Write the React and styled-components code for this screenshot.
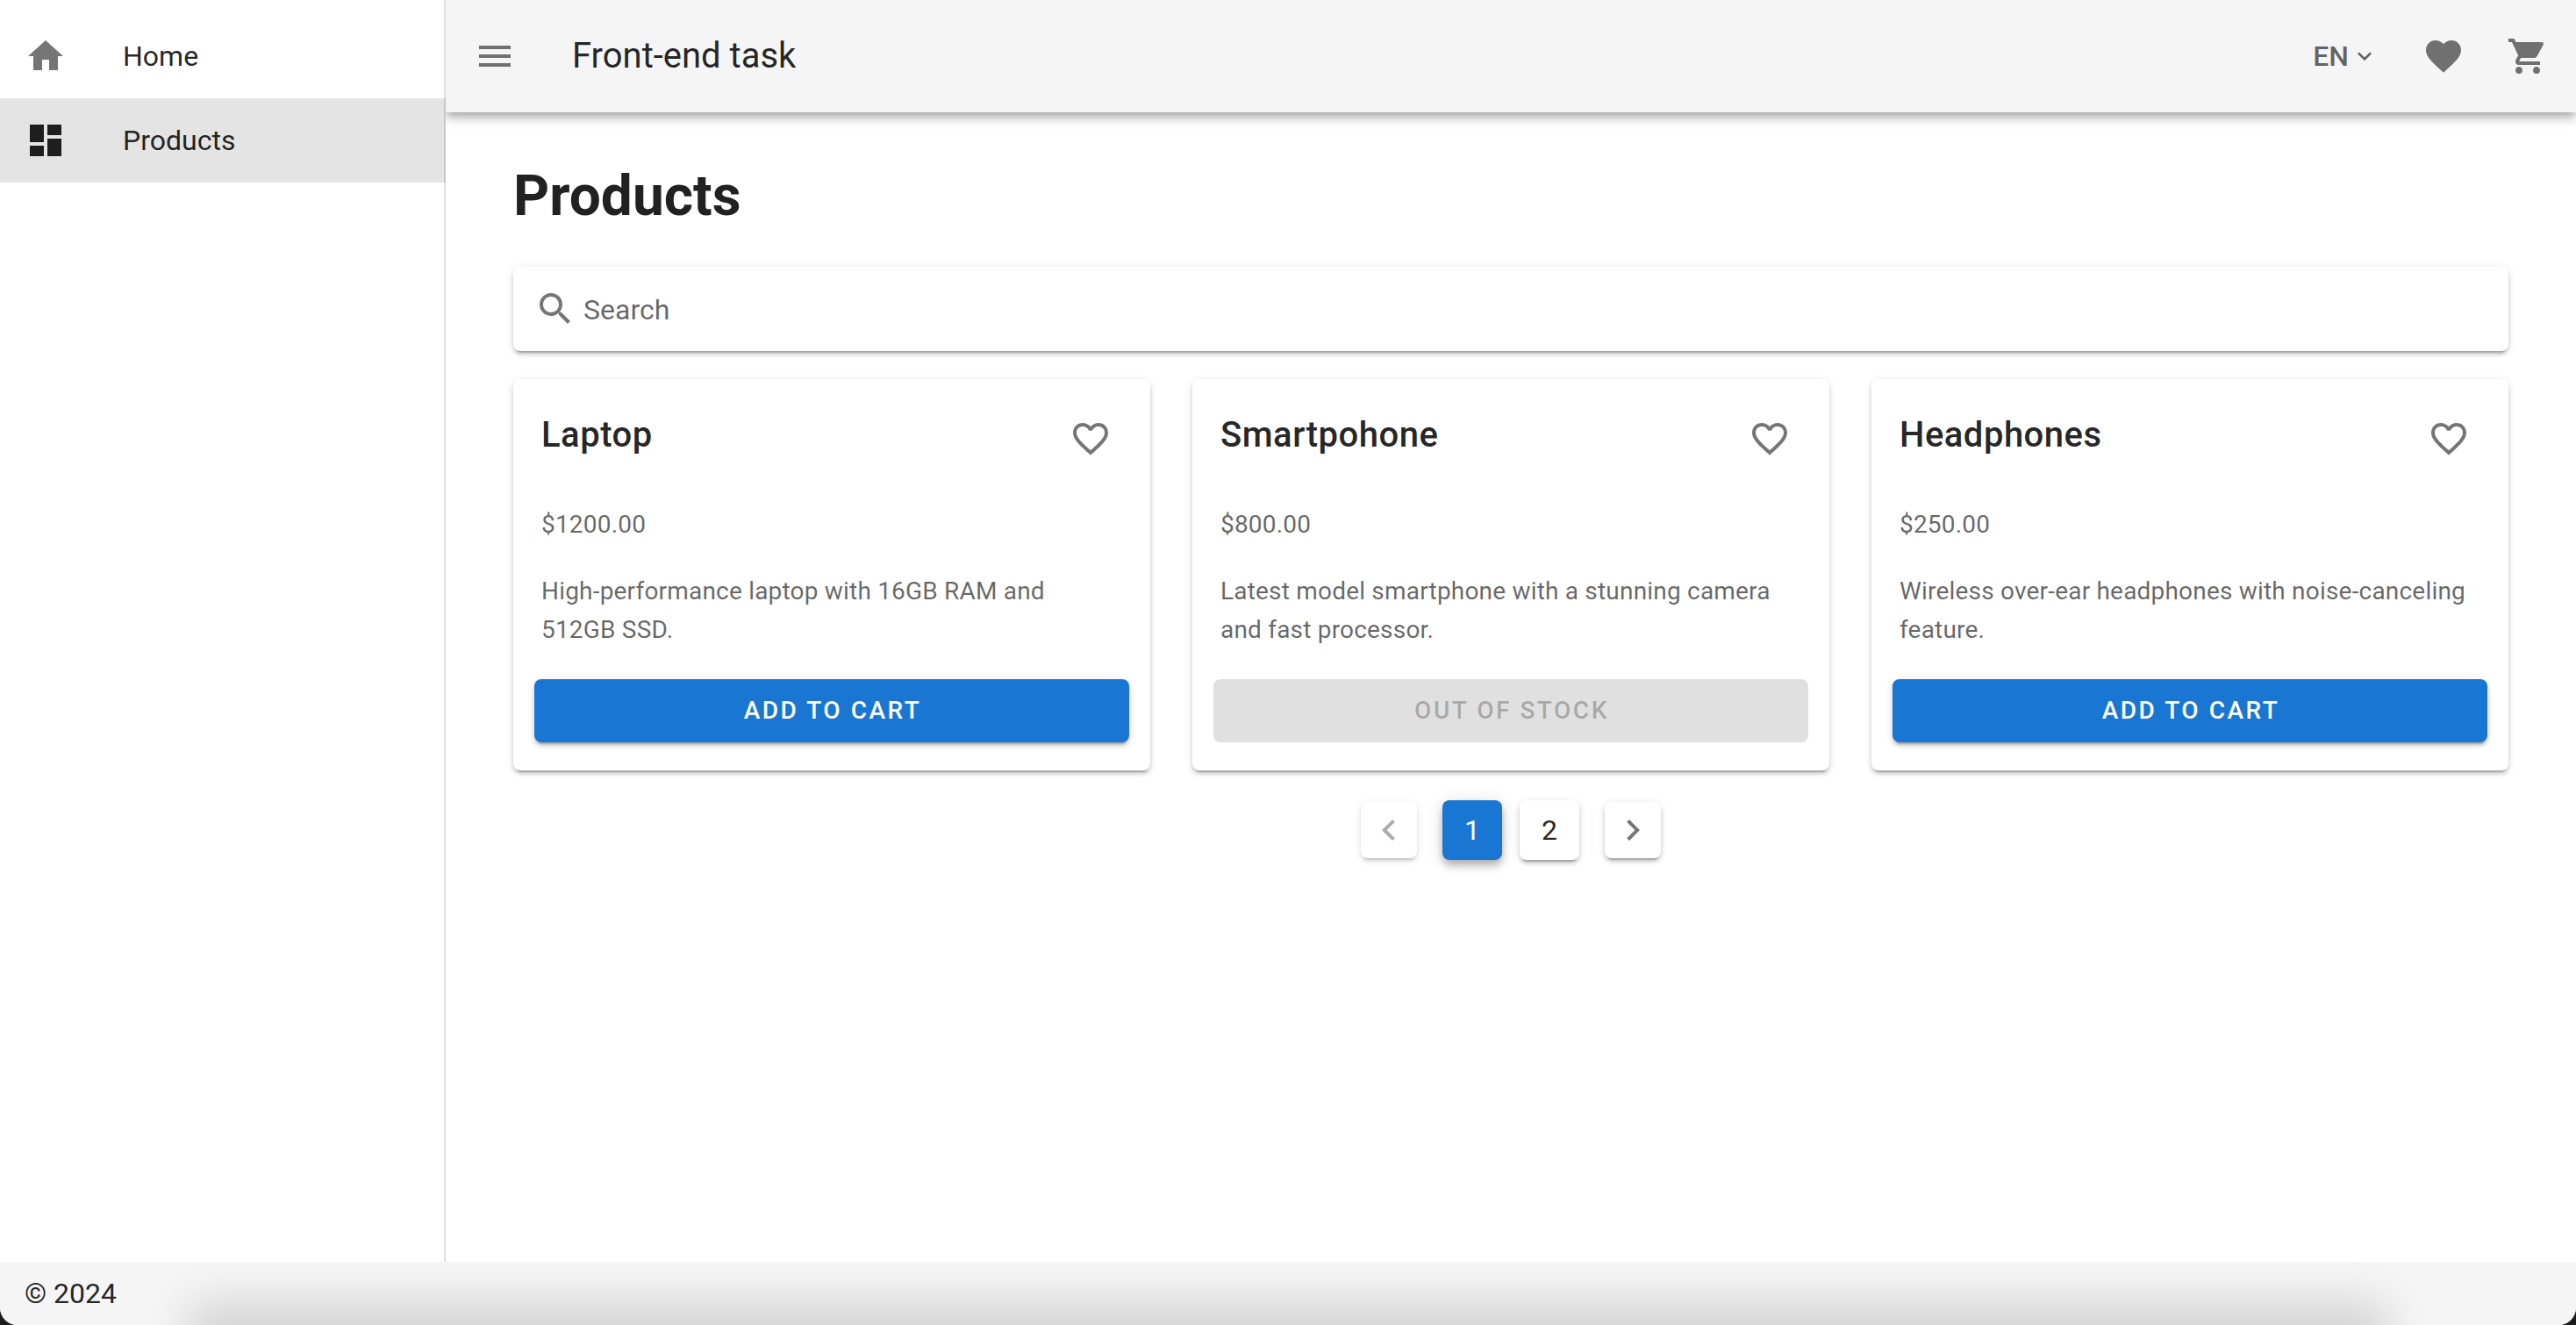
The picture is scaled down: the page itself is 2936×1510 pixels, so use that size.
import React, { useState } from "react";
import styled, { createGlobalStyle, css } from "styled-components";

const ink = "rgba(0, 0, 0, 0.87)";
const inkMuted = "rgba(0, 0, 0, 0.6)";
const inkIcon = "rgba(0, 0, 0, 0.54)";
const primary = "#1976d2";
const surface = "#f5f5f5";
const lowShadow =
  "0 6px 2px -4px rgba(0,0,0,.2), 0 4px 4px 0 rgba(0,0,0,.14), 0 2px 10px 0 rgba(0,0,0,.12)";
const highShadow =
  "0 4px 8px -2px rgba(0,0,0,.2), 0 8px 10px 0 rgba(0,0,0,.14), 0 2px 20px 0 rgba(0,0,0,.12)";

const GlobalStyle = createGlobalStyle`
  *, *::before, *::after { box-sizing: border-box; }
  body {
    margin: 0;
    background: #1c1c1c;
    color: ${ink};
    font: 400 32px/48px Roboto, "Liberation Sans", sans-serif;
    -webkit-font-smoothing: antialiased;
  }
  h1, h2, p, ul { margin: 0; padding: 0; }
  ul { list-style: none; }
  button, input { font: inherit; color: inherit; }
  button { border: 0; padding: 0; background: none; cursor: pointer; }
  a { color: inherit; text-decoration: none; }
`;

const icons = {
  home: "M10,20V14H14V20H19V12H22L12,3L2,12H5V20H10Z",
  dashboard: "M13,3V9H21V3M13,21H21V11H13M3,21H11V15H3M3,13H11V3H3V13Z",
  menu: "M3,6H21V8H3V6M3,11H21V13H3V11M3,16H21V18H3V16Z",
  chevronDown: "M7.41,8.58L12,13.17L16.59,8.58L18,10L12,16L6,10L7.41,8.58Z",
  chevronLeft: "M15.41,16.58L10.83,12L15.41,7.41L14,6L8,12L14,18L15.41,16.58Z",
  chevronRight: "M8.59,16.58L13.17,12L8.59,7.41L10,6L16,12L10,18L8.59,16.58Z",
  heart:
    "M12,21.35L10.55,20.03C5.4,15.36 2,12.27 2,8.5C2,5.41 4.42,3 7.5,3C9.24,3 10.91,3.81 12,5.08C13.09,3.81 14.76,3 16.5,3C19.58,3 22,5.41 22,8.5C22,12.27 18.6,15.36 13.45,20.03L12,21.35Z",
  heartOutline:
    "M12.1,18.55L12,18.65L11.89,18.55C7.14,14.24 4,11.39 4,8.5C4,6.5 5.5,5 7.5,5C9.04,5 10.54,6 11.07,7.36H12.93C13.46,6 14.96,5 16.5,5C18.5,5 20,6.5 20,8.5C20,11.39 16.86,14.24 12.1,18.55M16.5,3C14.76,3 13.09,3.81 12,5.08C10.91,3.81 9.24,3 7.5,3C4.42,3 2,5.41 2,8.5C2,12.27 5.4,15.36 10.55,20.03L12,21.35L13.45,20.03C18.6,15.36 22,12.27 22,8.5C22,5.41 19.58,3 16.5,3Z",
  cart:
    "M17,18C15.89,18 15,18.89 15,20A2,2 0 0,0 17,22A2,2 0 0,0 19,20C19,18.89 18.1,18 17,18M1,2V4H3L6.6,11.59L5.24,14.04C5.09,14.32 5,14.65 5,15A2,2 0 0,0 7,17H19V15H7.42A0.25,0.25 0 0,1 7.17,14.75C7.17,14.7 7.18,14.66 7.2,14.63L8.1,13H15.55C16.3,13 16.96,12.58 17.3,11.97L20.88,5.5C20.95,5.34 21,5.17 21,5A1,1 0 0,0 20,4H5.21L4.27,2M7,18C5.89,18 5,18.89 5,20A2,2 0 0,0 7,22A2,2 0 0,0 9,20C9,18.89 8.1,18 7,18Z",
  magnify:
    "M9.5,3A6.5,6.5 0 0,1 16,9.5C16,11.11 15.41,12.59 14.44,13.73L14.71,14H15.5L20.5,19L19,20.5L14,15.5V14.71L13.73,14.44C12.59,15.41 11.11,16 9.5,16A6.5,6.5 0 0,1 3,9.5A6.5,6.5 0 0,1 9.5,3M9.5,5C7,5 5,7 5,9.5C5,12 7,14 9.5,14C12,14 14,12 14,9.5C14,7 12,5 9.5,5Z",
};

const Glyph = styled.svg`
  display: block;
  flex: none;
  width: ${({ $size }) => $size}px;
  height: ${({ $size }) => $size}px;
  fill: currentColor;
`;

function Icon({ name, size = 48 }) {
  return (
    <Glyph $size={size} viewBox="0 0 24 24" aria-hidden="true">
      <path d={icons[name]} />
    </Glyph>
  );
}

const Shell = styled.div`
  position: relative;
  display: flex;
  flex-direction: column;
  min-height: 100vh;
  background: #fff;
  border-radius: 0 0 20px 20px;
  overflow: hidden;
`;

const Body = styled.div`
  display: flex;
  flex: 1;
`;

/* The divider is painted over the rows so the active row shows through it. */
const Sidebar = styled.nav`
  position: relative;
  z-index: 1;
  flex: none;
  width: 508px;
  padding: 16px 0;
  background: #fff;

  &::after {
    content: "";
    position: absolute;
    inset: 0 0 0 auto;
    width: 2px;
    background: rgba(0, 0, 0, 0.12);
  }
`;

const NavLink = styled.a`
  display: flex;
  align-items: center;
  gap: 64px;
  height: 96px;
  padding: 0 28px;
  background: ${({ $active }) => ($active ? "#e4e4e4" : "transparent")};

  svg {
    color: ${({ $active }) => ($active ? ink : inkIcon)};
  }
`;

const Page = styled.div`
  flex: 1;
  min-width: 0;
`;

const AppBar = styled.header`
  display: flex;
  align-items: center;
  height: 128px;
  padding: 0 31px 0 32px;
  background: ${surface};
  box-shadow: ${highShadow};
`;

const BarTitle = styled.div`
  flex: 1;
  padding-left: 64px;
  font-size: 40px;
`;

const BarActions = styled.div`
  display: flex;
  align-items: center;
  gap: 48px;
`;

const IconButton = styled.button`
  display: grid;
  place-items: center;
  height: 72px;
  color: ${inkIcon};
`;

const LanguageButton = styled.button`
  display: flex;
  align-items: center;
  gap: 2px;
  padding-right: 2px;
  font-weight: 500;
  color: ${inkMuted};
`;

const Content = styled.main`
  padding: 48px 77px;
`;

const PageTitle = styled.h1`
  margin-bottom: 32px;
  font-size: 64px;
  line-height: 96px;
  font-weight: 700;
`;

const SearchBox = styled.label`
  display: flex;
  align-items: center;
  gap: 8px;
  height: 96px;
  padding: 0 24px;
  margin-bottom: 32px;
  border-radius: 8px;
  background: #fff;
  box-shadow: ${lowShadow};
  color: ${inkIcon};
`;

const SearchInput = styled.input`
  flex: 1;
  min-width: 0;
  padding: 2px 0 0;
  border: 0;
  outline: 0;
  background: none;
  color: ${ink};

  &::placeholder {
    color: ${inkMuted};
    opacity: 1;
  }
`;

const ProductGrid = styled.ul`
  display: grid;
  grid-template-columns: repeat(3, 1fr);
  gap: 48px;
`;

const Card = styled.li`
  display: flex;
  flex-direction: column;
  padding: 32px 24px;
  border-radius: 8px;
  background: #fff;
  box-shadow: ${lowShadow};
`;

const CardHead = styled.div`
  display: flex;
  align-items: flex-start;
  justify-content: space-between;
  padding: 0 20px 0 8px;
  margin-bottom: 40px;
`;

const CardTitle = styled.h2`
  font-size: 40px;
  line-height: 64px;
  font-weight: 500;
  letter-spacing: 0.0125em;
`;

const CardText = styled.p`
  padding: 0 8px;
  margin-bottom: 32px;
  font-size: 28px;
  line-height: 44px;
  letter-spacing: 0.007em;
  color: ${inkMuted};
`;

const CardActions = styled.div`
  display: flex;
  margin-top: auto;
  padding-top: 2px;
`;

const CartButton = styled.button`
  flex: 1;
  height: 72px;
  padding-left: 2px;
  border-radius: 8px;
  background: ${primary};
  box-shadow: ${lowShadow};
  color: #fff;
  font-size: 28px;
  font-weight: 500;
  letter-spacing: 0.09em;
  text-transform: uppercase;

  &:disabled {
    background: rgba(0, 0, 0, 0.12);
    box-shadow: none;
    color: rgba(0, 0, 0, 0.26);
    cursor: default;
  }
`;

const Pagination = styled.nav`
  display: flex;
  align-items: center;
  justify-content: center;
  gap: 29px;
  padding-top: 34px;
`;

const PageList = styled.ul`
  display: flex;
  gap: 20px;
`;

const pagerBox = css`
  display: grid;
  place-items: center;
  border-radius: 8px;
  background: #fff;
  box-shadow: ${lowShadow};
`;

const PageStep = styled.button`
  ${pagerBox}
  width: 64px;
  height: 64px;
  color: ${inkIcon};

  &:disabled {
    opacity: 0.6;
    cursor: default;
  }
`;

const PageNumber = styled.button`
  ${pagerBox}
  width: 68px;
  height: 68px;
  ${({ $current }) =>
    $current &&
    css`
      background: ${primary};
      box-shadow: ${highShadow};
      color: #fff;
    `}
`;

const Footer = styled.footer`
  padding: 12px 28px;
  background: ${surface};
`;

const BottomShade = styled.div`
  position: absolute;
  left: 216px;
  right: 216px;
  bottom: -80px;
  height: 80px;
  box-shadow: 0 -26px 52px rgba(0, 0, 0, 0.14);
  pointer-events: none;
`;

const navItems = [
  { label: "Home", icon: "home" },
  { label: "Products", icon: "dashboard", active: true },
];

const products = [
  {
    name: "Laptop",
    price: 1200,
    text: "High-performance laptop with 16GB RAM and 512GB SSD.",
    inStock: true,
  },
  {
    name: "Smartpohone",
    price: 800,
    text: "Latest model smartphone with a stunning camera and fast processor.",
    inStock: false,
  },
  {
    name: "Headphones",
    price: 250,
    text: "Wireless over-ear headphones with noise-canceling feature.",
    inStock: true,
  },
];

function ProductCard({ product }) {
  return (
    <Card>
      <CardHead>
        <CardTitle>{product.name}</CardTitle>
        <IconButton type="button" aria-label={`Add ${product.name} to favorites`}>
          <Icon name="heartOutline" />
        </IconButton>
      </CardHead>
      <CardText>${product.price.toFixed(2)}</CardText>
      <CardText>{product.text}</CardText>
      <CardActions>
        <CartButton type="button" disabled={!product.inStock}>
          {product.inStock ? "Add to cart" : "Out of stock"}
        </CartButton>
      </CardActions>
    </Card>
  );
}

export default function App() {
  const [query, setQuery] = useState("");
  const [page, setPage] = useState(1);

  return (
    <Shell>
      <GlobalStyle />
      <Body>
        <Sidebar aria-label="Main">
          {navItems.map((item) => (
            <NavLink
              key={item.label}
              href="#"
              $active={item.active}
              aria-current={item.active ? "page" : undefined}
            >
              <Icon name={item.icon} />
              {item.label}
            </NavLink>
          ))}
        </Sidebar>
        <Page>
          <AppBar>
            <IconButton type="button" aria-label="Toggle menu">
              <Icon name="menu" />
            </IconButton>
            <BarTitle>Front-end task</BarTitle>
            <BarActions>
              <LanguageButton type="button">
                EN
                <Icon name="chevronDown" size={32} />
              </LanguageButton>
              <IconButton type="button" aria-label="Favorites">
                <Icon name="heart" />
              </IconButton>
              <IconButton type="button" aria-label="Cart">
                <Icon name="cart" />
              </IconButton>
            </BarActions>
          </AppBar>
          <Content>
            <PageTitle>Products</PageTitle>
            <SearchBox>
              <Icon name="magnify" />
              <SearchInput
                type="text"
                placeholder="Search"
                aria-label="Search"
                value={query}
                onChange={(event) => setQuery(event.target.value)}
              />
            </SearchBox>
            <ProductGrid>
              {products.map((product) => (
                <ProductCard key={product.name} product={product} />
              ))}
            </ProductGrid>
            <Pagination aria-label="Pagination">
              <PageStep
                type="button"
                aria-label="Previous page"
                disabled={page === 1}
                onClick={() => setPage(page - 1)}
              >
                <Icon name="chevronLeft" />
              </PageStep>
              <PageList>
                {[1, 2].map((number) => (
                  <li key={number}>
                    <PageNumber
                      type="button"
                      $current={number === page}
                      aria-current={number === page ? "page" : undefined}
                      onClick={() => setPage(number)}
                    >
                      {number}
                    </PageNumber>
                  </li>
                ))}
              </PageList>
              <PageStep
                type="button"
                aria-label="Next page"
                disabled={page === 2}
                onClick={() => setPage(page + 1)}
              >
                <Icon name="chevronRight" />
              </PageStep>
            </Pagination>
          </Content>
        </Page>
      </Body>
      <Footer>© 2024</Footer>
      <BottomShade />
    </Shell>
  );
}
